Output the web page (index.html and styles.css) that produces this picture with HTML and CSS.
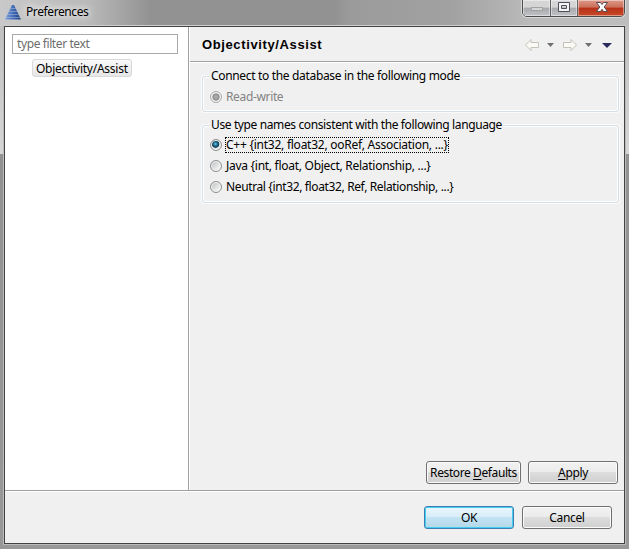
FILE: index.html
```html
<!DOCTYPE html>
<html lang="en">
<head>
<meta charset="utf-8">
<title>Preferences</title>
<link rel="stylesheet" href="styles.css">
</head>
<body>
<div class="window">
  <header class="titlebar">
    <svg class="app-icon" width="16" height="15" viewBox="0 0 16 15">
      <defs><linearGradient id="cone" x2="1"><stop offset="0" stop-color="#7fa3df"/><stop offset=".55" stop-color="#3f68b4"/><stop offset="1" stop-color="#21417f"/></linearGradient></defs>
      <path d="M7 0h2l7 14.500H0z" fill="url(#cone)"/>
      <path d="M0 3.500h16M0 6.500h16M0 9.500h16M0 12.500h16" stroke="#b9c3d6" stroke-width=".8" opacity=".6"/>
    </svg>
    <h1 class="title">Preferences</h1>
    <div class="controls">
      <span class="control minimize"><svg width="28" height="16"><rect x="8.500" y="7.500" width="11" height="3" fill="#d4d4d4" stroke="#a2a2a2"/></svg></span>
      <span class="control maximize"><svg width="26" height="16"><path d="M7.500 2.500h11v9h-11zM10.500 5.500v3h5v-3z" fill="#f4f4f4" stroke="#4c4e5c" fill-rule="evenodd"/></svg></span>
      <span class="control close"><svg width="47" height="16"><path d="M18.500 2.500h4l1.500 2 1.500-2h4L26.200 7l3.300 4.500h-4L24 9.300l-1.500 2.200h-4L21.800 7z" fill="#fff" stroke="#574a51"/></svg></span>
    </div>
  </header>
  <main class="client">
    <div class="panes">
      <aside class="sidebar">
        <div class="filter"><span class="t-filter">type filter text</span></div>
        <div class="tree-item"><span class="t-tree">Objectivity/Assist</span></div>
      </aside>
      <section class="content">
        <div class="page-head">
          <h2>Objectivity/Assist</h2>
          <svg class="nav" width="90" height="16" viewBox="0 0 90 16">
            <path d="M1.500 8L7 2.500v3h7.500v5H7v3z" fill="#fbfaf5" stroke="#c3c1b9"/>
            <path d="M52.500 8L47 2.500v3h-7.500v5H47v3z" fill="#fbfaf5" stroke="#c3c1b9"/>
            <path d="M23 6h7l-3.500 4zM61 6h7l-3.500 4z" fill="#707070"/>
            <path d="M78 6h10l-5 5z" fill="#2b2c5c"/>
          </svg>
        </div>
        <div class="page-body">
          <div class="group mode">
            <div class="legend"><span class="t-mode">Connect to the database in the following mode</span></div>
            <div class="radio disabled checked"><i></i><span class="t-rw">Read-write</span></div>
          </div>
          <div class="group language">
            <div class="legend"><span class="t-lang">Use type names consistent with the following language</span></div>
            <div class="radio checked"><i></i><span class="t-cpp focus">C++ {int32, float32, ooRef, Association, ...}</span></div>
            <div class="radio"><i></i><span class="t-java">Java {int, float, Object, Relationship, ...}</span></div>
            <div class="radio"><i></i><span class="t-neutral">Neutral {int32, float32, Ref, Relationship, ...}</span></div>
          </div>
          <div class="page-actions">
            <div class="button restore"><span class="t-restore">Restore <u>D</u>efaults</span></div>
            <div class="button"><span class="t-apply"><u>A</u>pply</span></div>
          </div>
        </div>
      </section>
    </div>
    <footer class="footer">
      <div class="button default"><span>OK</span></div>
      <div class="button"><span class="t-cancel">Cancel</span></div>
    </footer>
  </main>
</div>
</body>
</html>
```
FILE: styles.css
```css
* { box-sizing: border-box; }
body { margin: 0; width: 629px; height: 549px; overflow: hidden; font: 12px/16px "Noto Sans", "Open Sans", sans-serif; letter-spacing: -0.35px; color: #000; white-space: nowrap; }
.window {
  height: 549px;
  padding: 0 3px 4px;
  background:
    linear-gradient(90deg, #c9c9c9 0, #b9b9b9 90px, #929292 150px, #929292 335px, #9b9b9b 350px, #a1a1a1 450px, #bababa 530px, #bdbdbd 629px) 0 0 / 100% 26px no-repeat,
    linear-gradient(#bcbcbc 0, #d6d6d6 154px, #929292 154px, #989898 100%);
}
.titlebar { height: 25px; display: flex; align-items: flex-start; padding-left: 2px; }
.app-icon { margin-top: 5px; }
.title { margin: 4px 0 0 5px; font-size: 12px; font-weight: 400; line-height: 16px; letter-spacing: -0.4px; text-shadow: 0 0 7px #fff, 0 0 10px #fff; }
.controls { margin: -1px 1px 0 auto; display: flex; height: 18px; border: 1px solid #4c4c50; border-radius: 0 0 5px 5px; overflow: hidden; box-shadow: 0 0 0 1px #d8d8d8; }
.control { height: 16px; background: linear-gradient(#d5d5d5 0 45%, #a8a9ac 50%, #c1c2c6); border-right: 1px solid #606065; box-shadow: inset 0 0 0 1px #ffffff70; }
.minimize { width: 28px; }
.maximize { width: 27px; }
.close { width: 46px; border: 0; background: linear-gradient(#dc9886 0, #cc6f59 45%, #b73018 50%, #c84a27); }
.control svg { display: block; }
.client { width: 623px; height: 520px; border: 1px solid #bcbcbc; border-top-color: #cfcfcf; background: #f0f0f0; box-shadow: inset 0 0 0 1px #424244; padding: 1px; }
.panes { height: 464px; display: flex; border-bottom: 1px solid #a0a0a0; box-shadow: 0 1px #fff; }
.sidebar { width: 184px; flex: none; background: #fff; border-right: 1px solid #a0a0a0; padding: 7px 0 0 7px; }
.filter { width: 166px; height: 20px; border: 1px solid #a9a9a9; padding: 1px 4px; color: #6d6d6d; letter-spacing: -0.4px; }
.tree-item { width: 100px; height: 18px; line-height: 17px; margin: 5px 0 0 20px; padding: 0 3px; border: 1px solid #d9d9d9; border-radius: 3px; background: linear-gradient(#f9f9f9, #e7e7e7); letter-spacing: -0.25px; }
.content { flex: 1; display: flex; flex-direction: column; border-left: 1px solid #fff; }
.page-head { height: 35px; display: flex; justify-content: space-between; align-items: center; padding: 1px 10px 0 12px; border-bottom: 1px solid #a0a0a0; box-shadow: 0 1px #fff; }
h2 { margin: 0; font: bold 13px/18px "Liberation Sans", sans-serif; letter-spacing: 0.62px; }
.page-body { flex: 1; display: flex; flex-direction: column; padding: 14px 6px 6px 12px; }
.group { border: 1px solid #d5dfe5; border-radius: 3px; box-shadow: inset 0 0 0 1px #fff, 0 0 0 1px #fbfbfb; padding-left: 7px; }
.mode { height: 36px; }
.language { height: 78px; margin-top: 13px; }
.legend { display: table; height: 16px; margin-top: -9px; padding: 0 2px 0 1px; background: #f0f0f0; }
.t-mode { letter-spacing: -0.33px; }
.t-lang { letter-spacing: -0.38px; }
.radio { height: 21px; display: flex; align-items: center; gap: 3px; }
.mode .radio { margin-top: 2px; }
.language .legend + .radio { margin-top: 1px; }
.radio i { width: 12px; height: 12px; border: 1px solid #8e8f8f; border-radius: 50%; background: linear-gradient(135deg, #c4c7ca 15%, #f4f4f4 80%); box-shadow: inset 0 0 0 1px #f4f4f4; }
.radio.checked i { background: radial-gradient(circle at 45% 40%, #80d7f1 0, #247ba2 1.500px, #12394f 3.400px, #dfe4e7 4.200px); }
.radio.disabled { color: #838383; }
.radio.disabled i { border-color: #aaa; background: radial-gradient(#b4b4b4 0, #8f8f8f 3.200px, #eee 4.200px); }
.radio span { padding-left: 1px; }
.t-java { letter-spacing: -0.28px; }
.t-neutral { letter-spacing: -0.37px; }
.t-cpp { letter-spacing: -0.25px; }
.radio .focus { outline: 1px dotted #000; outline-offset: -1px; padding-right: 1px; }
.page-actions { margin-top: auto; display: flex; justify-content: flex-end; gap: 7px; }
.page-body > .group { margin-right: -1px; }
.button { width: 90px; height: 23px; border: 1px solid #707070; border-radius: 3px; background: linear-gradient(#f2f2f2 0, #ebebeb 48%, #dddddd 50%, #cfcfcf); box-shadow: inset 0 0 0 1px #fbfbfb; text-align: center; line-height: 21px; }
.restore { width: 95px; letter-spacing: -0.52px; }
.restore { letter-spacing: -0.4px; }
u { text-underline-offset: 2px; text-decoration-skip-ink: none; }
.button.default { border-color: #3c7fb1; background: linear-gradient(#eaf6fd, #d8eef9 48%, #c2e3f3 50%, #b4d8e9); box-shadow: inset 0 0 0 1px #46cdf2; }
.footer { height: 53px; display: flex; justify-content: flex-end; gap: 8px; padding: 15px 12px 0 0; }
```
